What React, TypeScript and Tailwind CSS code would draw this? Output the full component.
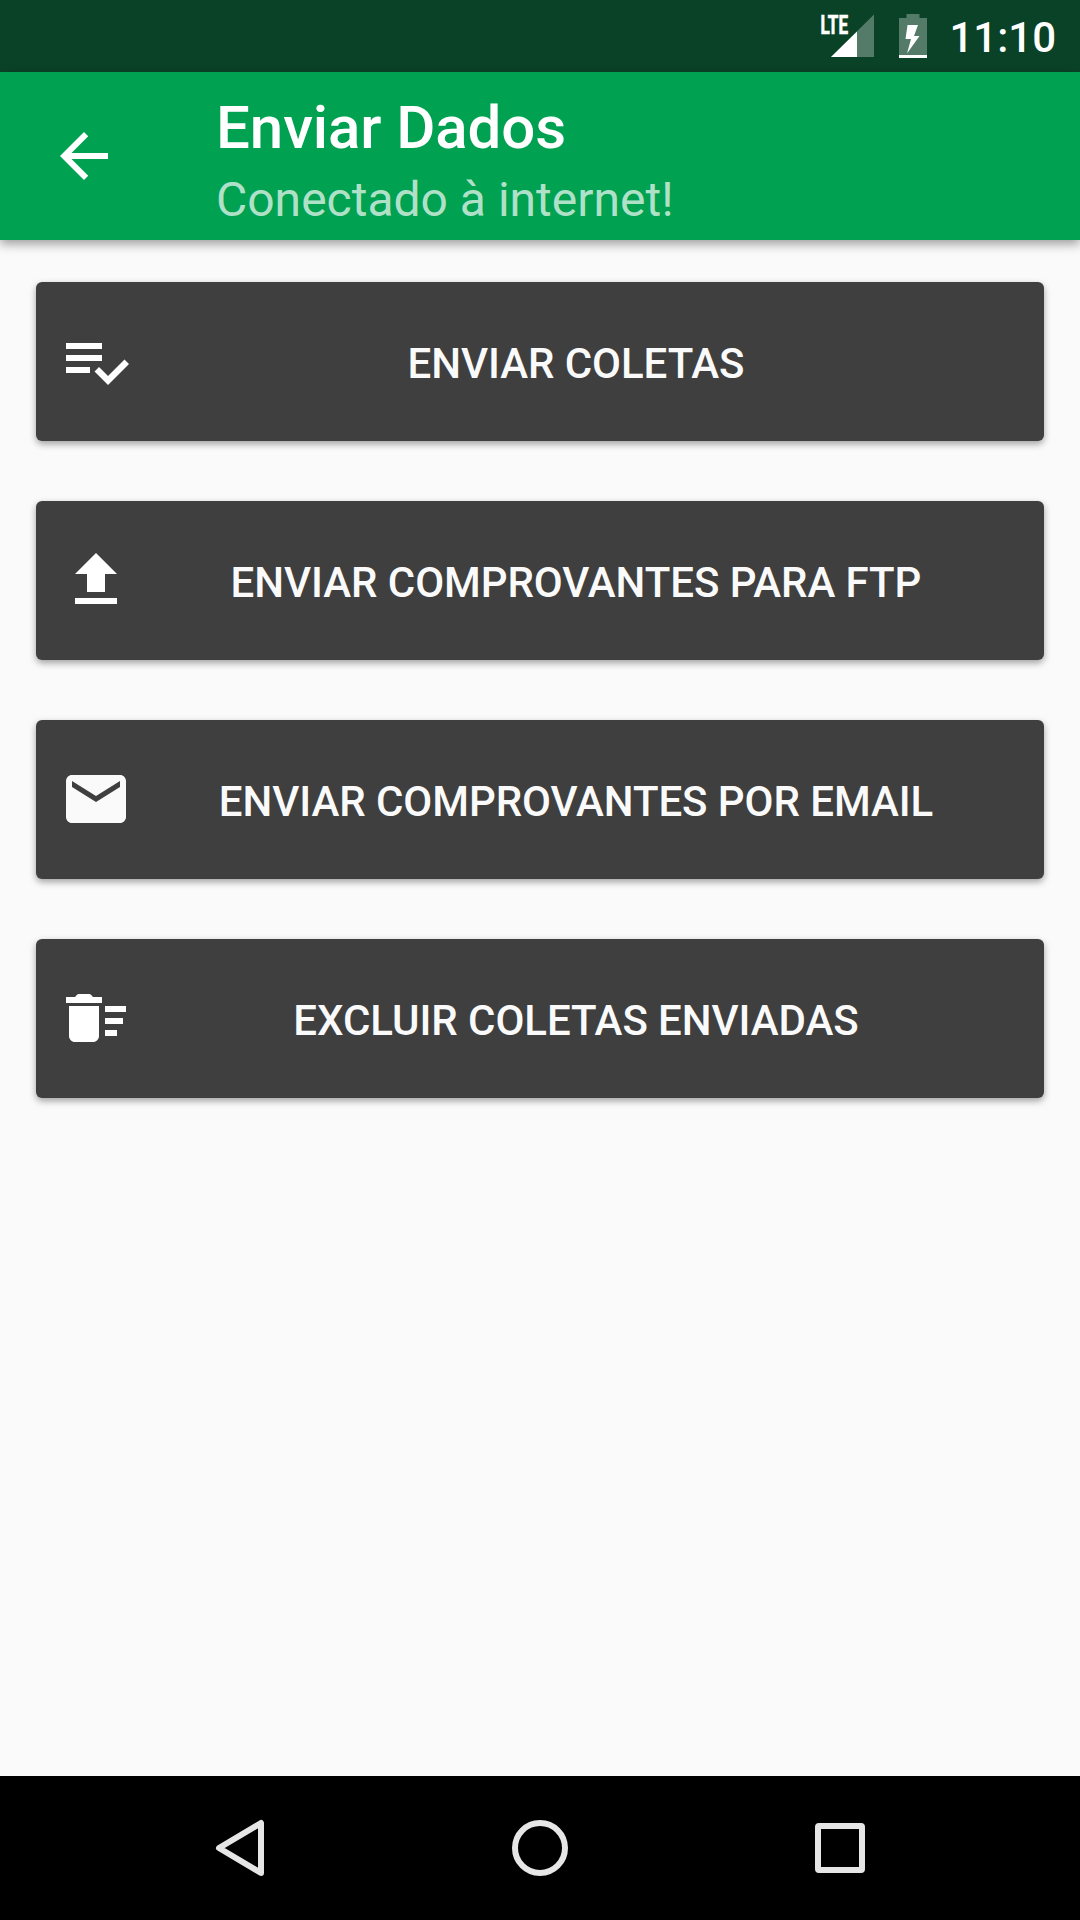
import type { ReactNode } from "react";

interface SendAction {
  label: string;
  path: string;
  iconClass: string;
}

const ACTIONS: SendAction[] = [
  {
    label: "Enviar coletas",
    path: "M14 10H2v2h12v-2zm0-4H2v2h12V6zM2 16h8v-2H2v2zm19.5-4.5L23 13l-6.99 7-4.51-4.5L13 14l3.01 3 5.49-5.5z",
    iconClass: "text-white",
  },
  {
    label: "Enviar comprovantes para FTP",
    path: "M9 16h6v-6h4l-7-7-7 7h4zm-4 2h14v2H5z",
    iconClass: "text-white",
  },
  {
    label: "Enviar comprovantes por email",
    path: "M20 4H4c-1.1 0-1.99.9-1.99 2L2 18c0 1.1.9 2 2 2h16c1.1 0 2-.9 2-2V6c0-1.1-.9-2-2-2zm0 4l-8 5-8-5V6l8 5 8-5v2z",
    iconClass: "text-[#fafafa]",
  },
  {
    label: "Excluir coletas enviadas",
    path: "M15 16h4v2h-4zm0-8h7v2h-7zm0 4h6v2h-6zM3 18c0 1.1.9 2 2 2h6c1.1 0 2-.9 2-2V8H3v10zM14 5h-3l-.6-.7c-.2-.2-.4-.3-.7-.3H6.3c-.3 0-.5.1-.7.3L5 5H2v2h12z",
    iconClass: "text-white",
  },
];

export default function App() {
  return (
    <div className="flex h-[1920px] w-[1080px] flex-col overflow-hidden bg-[#fafafa] font-[Roboto,sans-serif]">
      <StatusBar />
      <AppBar title="Enviar Dados" subtitle="Conectado à internet!" />

      <main className="flex flex-1 flex-col gap-[60px] px-9 pt-[42px]">
        {ACTIONS.map((action) => (
          <ActionButton key={action.label} action={action} />
        ))}
      </main>

      <NavigationBar />
    </div>
  );
}

function StatusBar() {
  return (
    <header className="flex h-[72px] shrink-0 justify-end bg-[#0a4227] pr-6 text-white">
      {/* Mobile signal */}
      <svg width="60" height="72" viewBox="818 0 60 72" className="mr-[21px]">
        <text
          x="820.5"
          y="33.500"
          fill="currentColor"
          stroke="currentColor"
          strokeWidth="0.7"
          fontFamily="Roboto, sans-serif"
          fontWeight="700"
          fontSize="26"
          textLength="27.5"
          lengthAdjust="spacingAndGlyphs"
        >
          LTE
        </text>
        <path d="M831 57L874 14.5V57z" fill="currentColor" opacity="0.3" />
        <path d="M831 57L857 31.5V57z" fill="currentColor" />
      </svg>

      {/* Charging battery */}
      <svg width="28" height="72" viewBox="899 0 28 72" className="mr-[22px]">
        <path d="M906.5 14h13v4H927v37h-28V18h7.5z" fill="currentColor" opacity="0.3" />
        <path d="M899 55h28v3h-28z" fill="currentColor" />
        <path d="M907.5 25H918l-4 11h5.5L907 53.5l4-14.5h-5.500z" fill="currentColor" />
      </svg>

      <span className="pt-[13px] text-[42px] leading-[49px] font-medium">11:10</span>
    </header>
  );
}

interface AppBarProps {
  title: string;
  subtitle: string;
}

function AppBar({ title, subtitle }: AppBarProps) {
  return (
    <div className="z-10 flex h-[168px] shrink-0 items-center bg-[#00a150] pl-12 text-white shadow-[0_4px_10px_rgba(0,0,0,0.38)]">
      <button aria-label="Voltar" className="mr-24">
        <svg width="72" height="72" viewBox="0 0 24 24" fill="currentColor">
          <path d="M20 11H7.83l5.59-5.59L12 4l-8 8 8 8 1.41-1.41L7.83 13H20v-2z" />
        </svg>
      </button>
      <div className="flex flex-col pt-3">
        <h1 className="text-[60px] leading-[70px] font-medium tracking-[-0.08px]">{title}</h1>
        <p className="mt-[5px] text-[48px] leading-[64px] text-white/70">{subtitle}</p>
      </div>
    </div>
  );
}

function ActionButton({ action }: { action: SendAction }) {
  return (
    <button className="flex h-[159px] w-full shrink-0 items-center rounded-[6px] bg-[#3f3f3f] px-6 shadow-[0_3px_7px_rgba(0,0,0,0.36)]">
      <svg
        width="72"
        height="72"
        viewBox="0 0 24 24"
        fill="currentColor"
        className={`mb-px shrink-0 ${action.iconClass}`}
      >
        <path d={action.path} />
      </svg>
      <span className="flex-1 pt-1 text-center text-[42px] leading-[49px] font-medium tracking-[-0.06px] text-[#fafafa] uppercase">
        {action.label}
      </span>
    </button>
  );
}

function NavigationBar() {
  return (
    <nav className="flex h-36 shrink-0 items-center justify-center gap-[200px] bg-black text-[#e6e6e6]">
      <NavKey label="Voltar">
        <path d="M71 23V73L29 48z" />
      </NavKey>
      <NavKey label="Início">
        <circle cx="50" cy="48" r="25" />
      </NavKey>
      <NavKey label="Recentes">
        <rect x="28" y="26" width="44" height="44" rx="1" />
      </NavKey>
    </nav>
  );
}

function NavKey({ label, children }: { label: string; children: ReactNode }) {
  return (
    <button aria-label={label}>
      <svg
        width="100"
        height="96"
        viewBox="0 0 100 96"
        fill="none"
        stroke="currentColor"
        strokeWidth="6"
        strokeLinejoin="round"
      >
        {children}
      </svg>
    </button>
  );
}
